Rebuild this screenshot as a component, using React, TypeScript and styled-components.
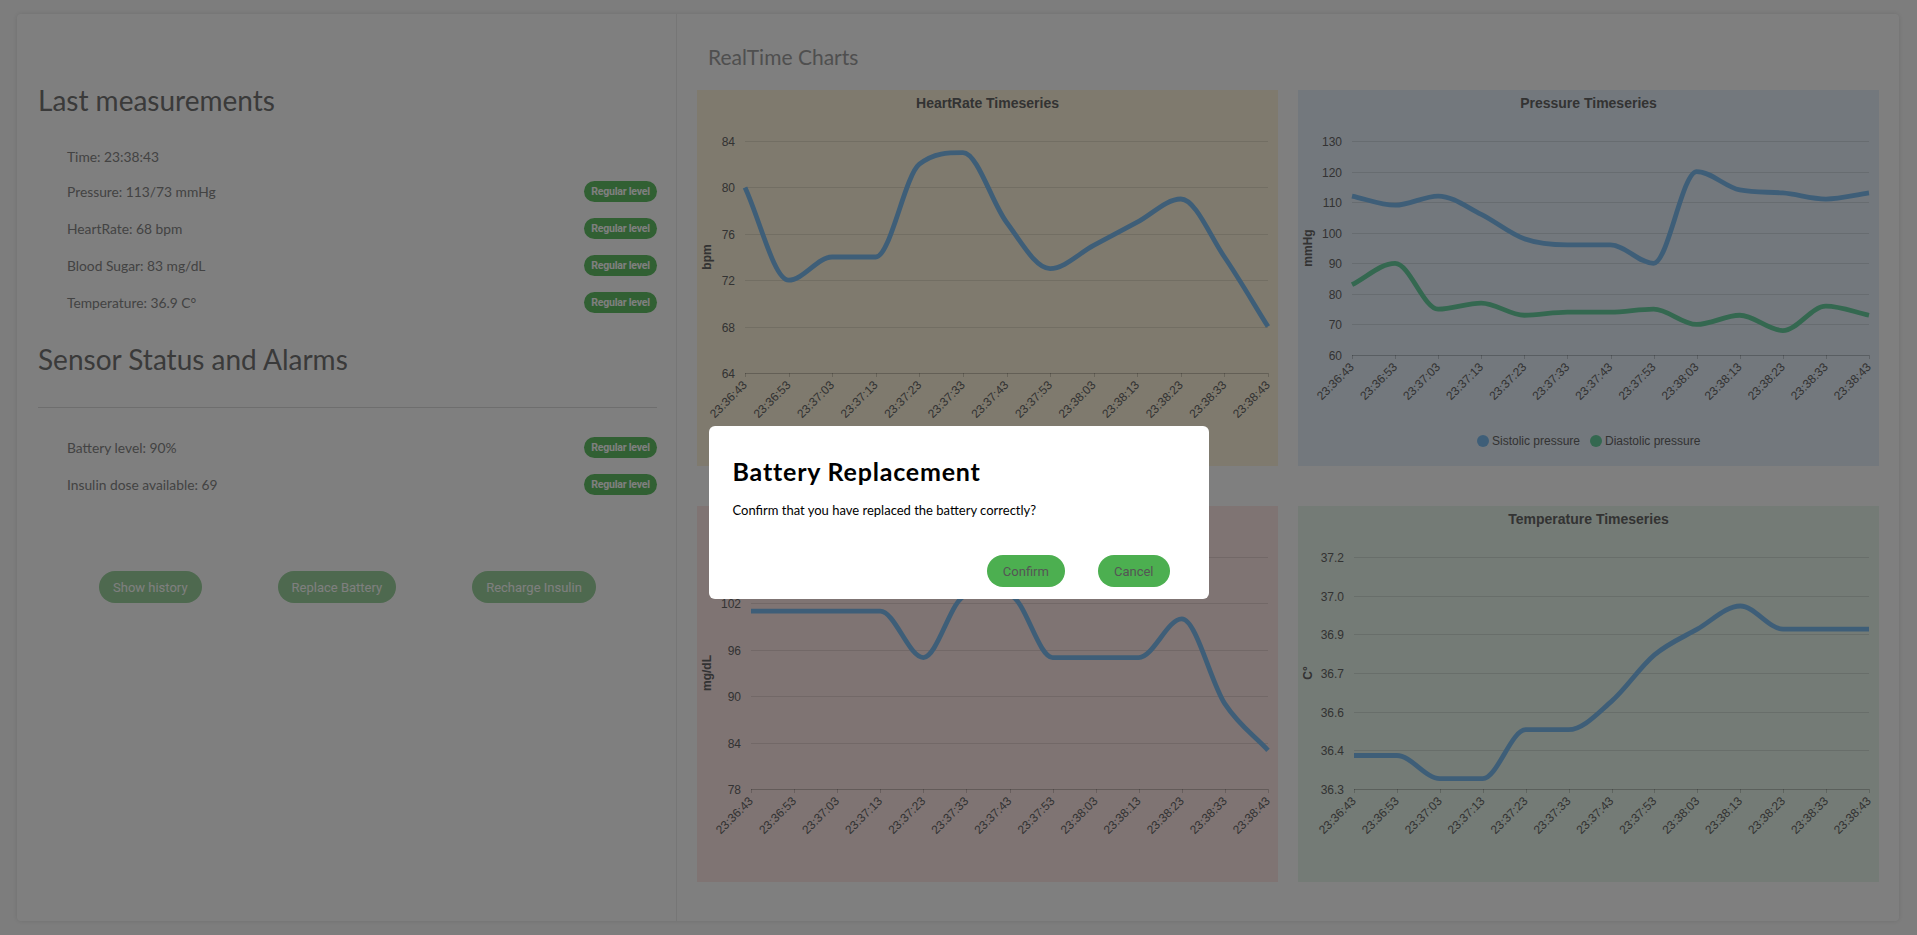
import React from 'react';
import styled, { createGlobalStyle } from 'styled-components';

const GlobalStyle = createGlobalStyle`
  html, body { margin: 0; padding: 0; }
  body { background: #fbfbfb; font-family: Lato, "Liberation Sans", sans-serif; }
  * { box-sizing: border-box; }
`;

const Page = styled.div`
  padding: 14px 18px 14px 17px;
`;

const Card = styled.div`
  display: grid;
  grid-template-columns: 659px 1fr;
  background: #ffffff;
  border-radius: 4px;
  box-shadow: 0 0 5px rgba(0, 0, 0, 0.12);
`;

const LeftPanel = styled.section`
  padding: 69px 19px 0 21px;
  display: flex;
  flex-direction: column;
`;

const SectionTitle = styled.h2<{ $mt?: number }>`
  margin: ${(p) => p.$mt ?? 0}px 0 0 0;
  font-family: Lato, sans-serif;
  font-weight: 400;
  font-size: 28px;
  line-height: 34px;
  color: #747474;
`;

const List = styled.div<{ $mt: number }>`
  margin-top: ${(p) => p.$mt}px;
  padding-left: 29px;
  display: flex;
  flex-direction: column;
`;

const Row = styled.div`
  display: flex;
  align-items: center;
  justify-content: space-between;
  padding: 8px 0;
`;

const RowText = styled.span`
  font-size: 13.8px;
  line-height: 17px;
  color: #868686;
`;

const Badge = styled.span`
  display: inline-flex;
  align-items: center;
  justify-content: center;
  width: 73px;
  height: 21px;
  border-radius: 11px;
  background: #62c066;
  color: #ffffff;
  font-family: Roboto, sans-serif;
  font-weight: 700;
  font-size: 10.5px;
  letter-spacing: -0.2px;
`;

const Divider = styled.hr`
  margin: 31px 0 0 0;
  border: none;
  border-top: 1px solid #dcdcdc;
  height: 0;
`;

const ButtonRow = styled.div`
  display: flex;
  gap: 76px;
  margin-top: 68px;
  padding-left: 61px;
`;

const ActionButton = styled.button`
  height: 32px;
  padding: 0 14px;
  border: none;
  border-radius: 16px;
  background: #4caf50;
  opacity: 0.55;
  color: #ffffff;
  font-family: Roboto, sans-serif;
  font-size: 13px;
  cursor: pointer;
`;

const RightPanel = styled.section`
  border-left: 1px solid #ededed;
  padding: 30px 20px 39px 20px;
`;

const ChartsHeading = styled.h3`
  margin: 0 0 21px 11px;
  font-family: Lato, sans-serif;
  font-weight: 400;
  font-size: 21px;
  line-height: 25px;
  color: #9e9e9e;
`;

const ChartGrid = styled.div`
  display: grid;
  grid-template-columns: 581px 581px;
  column-gap: 20px;
  row-gap: 40px;
`;

const ChartBox = styled.div<{ $bg: string }>`
  height: 376px;
  background: ${(p) => p.$bg};
`;

const ChartSvg = styled.svg`
  display: block;
  font-family: "Liberation Sans", Arial, sans-serif;
`;

const Overlay = styled.div`
  position: fixed;
  inset: 0;
  background: rgba(0, 0, 0, 0.5);
`;

const Modal = styled.div`
  position: absolute;
  top: 426px;
  left: 50%;
  transform: translateX(-50%);
  width: 500px;
  background: #ffffff;
  border-radius: 6px;
  padding: 30px 39px 12px 24px;
  display: flex;
  flex-direction: column;
`;

const ModalTitle = styled.h2`
  margin: 0;
  font-family: Lato, sans-serif;
  font-weight: 700;
  font-size: 25px;
  line-height: 30px;
  letter-spacing: 0.8px;
  color: #000000;
`;

const ModalText = styled.p`
  margin: 15px 0 0 0;
  font-size: 13px;
  line-height: 18px;
  color: #000000;
`;

const ModalActions = styled.div`
  display: flex;
  justify-content: flex-end;
  gap: 33px;
  margin-top: 36px;
`;

const ModalButton = styled.button`
  height: 32px;
  padding: 0 16px;
  border: none;
  border-radius: 16px;
  background: #4caf50;
  color: #555555;
  font-family: Roboto, sans-serif;
  font-size: 13px;
  cursor: pointer;
`;

const TIMES = [
  '23:36:43', '23:36:53', '23:37:03', '23:37:13', '23:37:23', '23:37:33', '23:37:43',
  '23:37:53', '23:38:03', '23:38:13', '23:38:23', '23:38:33', '23:38:43',
];

type Series = { color: string; data: number[] };
type ChartSpec = {
  title: string;
  axisTitle: string;
  bg: string;
  x0: number;
  y0: number;
  y1: number;
  min: number;
  max: number;
  ticks: string[];
  series: Series[];
  legend?: { label: string; color: string }[];
};

const W = 581;
const H = 376;
const X1 = 571;

function monotonePath(pts: [number, number][]) {
  const n = pts.length;
  const dK: number[] = [];
  for (let i = 0; i < n - 1; i++) dK.push((pts[i + 1][1] - pts[i][1]) / (pts[i + 1][0] - pts[i][0]));
  const m: number[] = [];
  for (let i = 0; i < n; i++) {
    if (i === 0) m.push(dK[0]);
    else if (i === n - 1) m.push(dK[n - 2]);
    else if (Math.sign(dK[i - 1]) !== Math.sign(dK[i])) m.push(0);
    else m.push((dK[i - 1] + dK[i]) / 2);
  }
  for (let i = 0; i < n - 1; i++) {
    if (Math.abs(dK[i]) < 1e-9) {
      m[i] = 0;
      m[i + 1] = 0;
      continue;
    }
    const a = m[i] / dK[i];
    const b = m[i + 1] / dK[i];
    const s = a * a + b * b;
    if (s > 9) {
      const t = 3 / Math.sqrt(s);
      m[i] = a * t * dK[i];
      m[i + 1] = b * t * dK[i];
    }
  }
  let d = `M${pts[0][0].toFixed(2)},${pts[0][1].toFixed(2)}`;
  for (let i = 0; i < n - 1; i++) {
    const dx = (pts[i + 1][0] - pts[i][0]) / 3;
    d += ` C${(pts[i][0] + dx).toFixed(2)},${(pts[i][1] + m[i] * dx).toFixed(2)} ${(pts[i + 1][0] - dx).toFixed(2)},${(pts[i + 1][1] - m[i + 1] * dx).toFixed(2)} ${pts[i + 1][0].toFixed(2)},${pts[i + 1][1].toFixed(2)}`;
  }
  return d;
}

function TimeChart({ spec }: { spec: ChartSpec }) {
  const { x0, y0, y1, min, max } = spec;
  const sx = (i: number) => x0 + (i * (X1 - x0)) / 12;
  const sy = (v: number) => y1 - ((v - min) / (max - min)) * (y1 - y0);
  const tickStep = (max - min) / (spec.ticks.length - 1);
  return (
    <ChartBox $bg={spec.bg}>
      <ChartSvg width={W} height={H} viewBox={`0 0 ${W} ${H}`}>
        <text x={W / 2} y={13} textAnchor="middle" dominantBaseline="central" fontSize={14} fontWeight="bold" fill="#666">
          {spec.title}
        </text>
        {spec.ticks.map((label, k) => {
          const y = Math.round(sy(min + k * tickStep)) + 0.5;
          return (
            <g key={label + k}>
              <line x1={x0} x2={X1} y1={y} y2={y} stroke={k === 0 ? 'rgba(0,0,0,0.22)' : 'rgba(0,0,0,0.1)'} strokeWidth={1} />
              <text x={x0 - 10} y={y} textAnchor="end" dominantBaseline="central" fontSize={12} fill="#666">
                {label}
              </text>
            </g>
          );
        })}
        {TIMES.map((t, i) => {
          const x = Math.round(sx(i)) + 0.5;
          return (
            <g key={t}>
              <line x1={x} x2={x} y1={y1} y2={y1 + 4} stroke="rgba(0,0,0,0.18)" strokeWidth={1} />
              <text
                transform={`translate(${sx(i)}, ${y1 + 10}) rotate(-45)`}
                textAnchor="end"
                dominantBaseline="central"
                fontSize={12}
                fill="#666"
              >
                {t}
              </text>
            </g>
          );
        })}
        <text
          transform={`translate(10, ${(y0 + y1) / 2}) rotate(-90)`}
          textAnchor="middle"
          dominantBaseline="central"
          fontSize={12}
          fontWeight="bold"
          fill="#666"
        >
          {spec.axisTitle}
        </text>
        {spec.series.map((s, k) => (
          <path
            key={k}
            d={monotonePath(s.data.map((v, i) => [sx(i), sy(v)] as [number, number]))}
            fill="none"
            stroke={s.color}
            strokeWidth={4.8}
            strokeLinejoin="round"
          />
        ))}
        {spec.legend && (
          <g>
            <circle cx={185} cy={351} r={6} fill={spec.legend[0].color} />
            <text x={194} y={351} dominantBaseline="central" fontSize={12} fill="#666">
              {spec.legend[0].label}
            </text>
            <circle cx={298} cy={351} r={6} fill={spec.legend[1].color} />
            <text x={307} y={351} dominantBaseline="central" fontSize={12} fill="#666">
              {spec.legend[1].label}
            </text>
          </g>
        )}
      </ChartSvg>
    </ChartBox>
  );
}

const BLUE = '#7dbdf0';
const GREEN = '#68d0a0';

const CHARTS: ChartSpec[] = [
  {
    title: 'HeartRate Timeseries',
    axisTitle: 'bpm',
    bg: '#fff5dd',
    x0: 48,
    y0: 51,
    y1: 283,
    min: 64,
    max: 84,
    ticks: ['64', '68', '72', '76', '80', '84'],
    series: [{ color: BLUE, data: [80, 72, 74, 74, 82, 83, 77, 73, 75, 77, 79, 74, 68] }],
  },
  {
    title: 'Pressure Timeseries',
    axisTitle: 'mmHg',
    bg: '#e6f1fb',
    x0: 54,
    y0: 51,
    y1: 265,
    min: 60,
    max: 130,
    ticks: ['60', '70', '80', '90', '100', '110', '120', '130'],
    series: [
      { color: BLUE, data: [112, 109, 112, 106, 98, 96, 96, 90, 120, 114, 113, 111, 113] },
      { color: GREEN, data: [83, 90, 75, 77, 73, 74, 74, 75, 70, 73, 68, 76, 73] },
    ],
    legend: [
      { label: 'Sistolic pressure', color: BLUE },
      { label: 'Diastolic pressure', color: GREEN },
    ],
  },
  {
    title: 'BloodSugar Timeseries',
    axisTitle: 'mg/dL',
    bg: '#ffe9e6',
    x0: 54,
    y0: 51,
    y1: 283,
    min: 78,
    max: 108,
    ticks: ['78', '84', '90', '96', '102', '108'],
    series: [{ color: BLUE, data: [101, 101, 101, 101, 95, 103, 103, 95, 95, 95, 100, 89, 83] }],
  },
  {
    title: 'Temperature Timeseries',
    axisTitle: 'C°',
    bg: '#e9f7ec',
    x0: 56,
    y0: 51,
    y1: 283,
    min: 36.3,
    max: 37.2,
    ticks: ['36.3', '36.4', '36.6', '36.7', '36.9', '37.0', '37.2'],
    series: [
      {
        color: BLUE,
        data: [36.43, 36.43, 36.34, 36.34, 36.53, 36.53, 36.64, 36.82, 36.92, 37.01, 36.92, 36.92, 36.92],
      },
    ],
  },
];

const MEASUREMENTS: { text: string; badge: boolean }[] = [
  { text: 'Time: 23:38:43', badge: false },
  { text: 'Pressure: 113/73 mmHg', badge: true },
  { text: 'HeartRate: 68 bpm', badge: true },
  { text: 'Blood Sugar: 83 mg/dL', badge: true },
  { text: 'Temperature: 36.9 C°', badge: true },
];

const SENSORS = ['Battery level: 90%', 'Insulin dose available: 69'];

export default function App() {
  return (
    <>
      <GlobalStyle />
      <Page>
        <Card>
          <LeftPanel>
            <SectionTitle>Last measurements</SectionTitle>
            <List $mt={23}>
              {MEASUREMENTS.map((m) => (
                <Row key={m.text}>
                  <RowText>{m.text}</RowText>
                  {m.badge && <Badge>Regular level</Badge>}
                </Row>
              ))}
            </List>
            <SectionTitle $mt={21}>Sensor Status and Alarms</SectionTitle>
            <Divider />
            <List $mt={21}>
              {SENSORS.map((s) => (
                <Row key={s}>
                  <RowText>{s}</RowText>
                  <Badge>Regular level</Badge>
                </Row>
              ))}
            </List>
            <ButtonRow>
              <ActionButton>Show history</ActionButton>
              <ActionButton>Replace Battery</ActionButton>
              <ActionButton>Recharge Insulin</ActionButton>
            </ButtonRow>
          </LeftPanel>
          <RightPanel>
            <ChartsHeading>RealTime Charts</ChartsHeading>
            <ChartGrid>
              {CHARTS.map((c) => (
                <TimeChart key={c.title} spec={c} />
              ))}
            </ChartGrid>
          </RightPanel>
        </Card>
      </Page>
      <Overlay>
        <Modal>
          <ModalTitle>Battery Replacement</ModalTitle>
          <ModalText>Confirm that you have replaced the battery correctly?</ModalText>
          <ModalActions>
            <ModalButton>Confirm</ModalButton>
            <ModalButton>Cancel</ModalButton>
          </ModalActions>
        </Modal>
      </Overlay>
    </>
  );
}
